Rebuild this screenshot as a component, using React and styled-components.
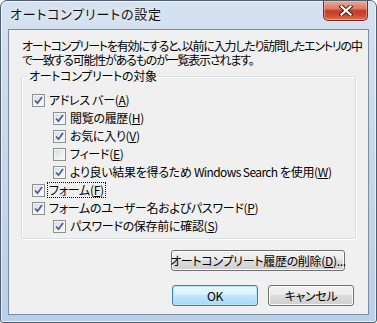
import styled, { createGlobalStyle } from "styled-components";

const GlobalStyle = createGlobalStyle`
  html, body { margin: 0; padding: 0; background: #ffffff; }
  body {
    font-family: "Noto Sans CJK JP", "Noto Sans", sans-serif;
    font-feature-settings: "palt";
    color: #000;
  }
`;

const Window = styled.div`
  width: 377px;
  height: 323px;
  box-sizing: border-box;
  border: 1px solid #4f5d6e;
  border-radius: 7px 7px 3px 3px;
  background: linear-gradient(180deg, #d6e2f0 0%, #cbdaec 35%, #b9d0ea 100%);
  box-shadow: inset 0 0 0 1px rgba(255, 255, 255, 0.65);
  display: flex;
  flex-direction: column;
  padding: 0 7px 7px;
  overflow: hidden;
`;

const TitleBar = styled.div`
  height: 28px;
  flex: none;
  display: flex;
  justify-content: space-between;
  align-items: flex-start;
`;

const Title = styled.div`
  padding: 5px 0 0 2px;
  font-size: 13px;
  letter-spacing: 0.8px;
  line-height: 16px;
  color: #111;
  text-shadow: 0 0 6px rgba(255, 255, 255, 0.9);
`;

const CloseButton = styled.div`
  width: 45px;
  height: 20px;
  margin-right: 1px;
  box-sizing: border-box;
  border: 1px solid #7a2c20;
  border-top: none;
  border-radius: 0 0 5px 5px;
  background: linear-gradient(180deg, #eaa99b 0%, #dc7a65 40%, #c53b22 52%, #cf4f35 80%, #e07a5e 100%);
  box-shadow: inset 0 0 0 1px rgba(255, 200, 190, 0.45);
  display: flex;
  align-items: center;
  justify-content: center;
`;

const Client = styled.div`
  flex: 1;
  background: #f0f0f0;
  border: 1px solid #7d8ca0;
  padding: 0 12px;
  display: flex;
  flex-direction: column;
`;

const Description = styled.p`
  margin: 9px 0 2px 1px;
  font-size: 12px;
  letter-spacing: -1.2px;
  line-height: 14px;
  white-space: nowrap;
`;

const Group = styled.fieldset`
  margin: 0;
  padding: 8px 0 3px 10px;
  border: 1px solid #d5dfe5;
  border-radius: 2px;
  box-shadow: 1px 1px 0 #fff, inset 1px 1px 0 #fff;
  min-width: 0;
`;

const Legend = styled.legend`
  padding: 0 2px 0 1px;
  margin-left: -4px;
  font-size: 12px;
  letter-spacing: -0.3px;
  line-height: 14px;
`;

const Row = styled.div`
  height: 18px;
  display: flex;
  align-items: center;
  padding-left: ${(p) => p.$level * 21}px;
  font-size: 12px;
  letter-spacing: -0.3px;
  white-space: nowrap;
`;

const Latin = styled.span`
  letter-spacing: -0.6px;
`;

const Box = styled.span`
  width: 13px;
  height: 13px;
  box-sizing: border-box;
  flex: none;
  border: 1px solid #8f8f8f;
  background: linear-gradient(135deg, #d6dae0 0%, #eef0f2 60%, #fbfbfb 100%);
  box-shadow: inset 0 0 0 1px #f6f6f6;
  display: flex;
  align-items: center;
  justify-content: center;
  margin-right: 3px;
`;

const Label = styled.span`
  line-height: 14px;
  padding: 0 1px;
  border: 1px dotted ${(p) => (p.$focus ? "#000" : "transparent")};
  margin-left: -1px;
`;

const Key = styled.u`
  text-decoration: underline;
  text-underline-offset: 1px;
`;

const Button = styled.button`
  font-family: inherit;
  font-feature-settings: "palt";
  font-size: 12px;
  letter-spacing: -0.3px;
  color: #000;
  height: 21px;
  width: ${(p) => p.$w}px;
  padding: 0;
  border: 1px solid ${(p) => (p.$default ? "#3c7fb1" : "#707070")};
  border-radius: 3px;
  background: ${(p) =>
    p.$default
      ? "linear-gradient(180deg, #eaf6fd 0%, #d9f0fc 49%, #bee6fd 50%, #a7d9f5 100%)"
      : "linear-gradient(180deg, #f2f2f2 0%, #ebebeb 49%, #dddddd 50%, #cfcfcf 100%)"};
  box-shadow: inset 0 0 0 1px ${(p) => (p.$default ? "#bde3f7" : "#fcfcfc")};
  display: flex;
  align-items: center;
  justify-content: center;
  white-space: nowrap;
`;

const DeleteRow = styled.div`
  display: flex;
  justify-content: flex-end;
  margin-top: 11px;
  padding-right: 11px;
`;

const Footer = styled.div`
  display: flex;
  justify-content: flex-end;
  gap: 10px;
  margin-top: 14px;
  padding-right: 2px;
`;

function Check({ on }) {
  return (
    <Box>
      {on && (
        <svg width="9" height="9" viewBox="0 0 9 9">
          <path d="M1 4.5 L3.5 7.2 L8 1" fill="none" stroke="#4a5e96" strokeWidth="1.8" />
        </svg>
      )}
    </Box>
  );
}

const items = [
  { level: 0, on: true, text: "アドレス バー(", key: "A" },
  { level: 1, on: true, text: "閲覧の履歴(", key: "H" },
  { level: 1, on: true, text: "お気に入り(", key: "V" },
  { level: 1, on: false, text: "フィード(", key: "E" },
  {
    level: 1,
    on: true,
    text: (
      <>
        より良い結果を得るため <Latin>Windows Search</Latin> を使用(
      </>
    ),
    key: "W",
  },
  { level: 0, on: true, text: "フォーム(", key: "F", focus: true },
  { level: 0, on: true, text: "フォームのユーザー名およびパスワード(", key: "P" },
  { level: 1, on: true, text: "パスワードの保存前に確認(", key: "S" },
];

export default function App() {
  return (
    <>
      <GlobalStyle />
      <Window>
        <TitleBar>
          <Title>オートコンプリートの設定</Title>
          <CloseButton>
            <svg width="14" height="11" viewBox="0 0 14 11">
              <path d="M2.5 1.5 L11.5 9.5 M11.5 1.5 L2.5 9.5" stroke="#4a1a12" strokeWidth="4" strokeLinecap="square" />
              <path d="M2.5 1.5 L11.5 9.5 M11.5 1.5 L2.5 9.5" stroke="#ffffff" strokeWidth="2.2" strokeLinecap="square" />
            </svg>
          </CloseButton>
        </TitleBar>
        <Client>
          <Description>
            オートコンプリートを有効にすると、以前に入力したり訪問したエントリの中
            <br />
            で一致する可能性があるものが一覧表示されます。
          </Description>
          <Group>
            <Legend>オートコンプリートの対象</Legend>
            {items.map((it) => (
              <Row key={it.key} $level={it.level}>
                <Check on={it.on} />
                <Label $focus={it.focus}>
                  {it.text}
                  <Key>{it.key}</Key>)
                </Label>
              </Row>
            ))}
          </Group>
          <DeleteRow>
            <Button $w={174}>
              オートコンプリート履歴の削除(<Key>D</Key>)...
            </Button>
          </DeleteRow>
          <Footer>
            <Button $w={86} $default>
              OK
            </Button>
            <Button $w={86}>キャンセル</Button>
          </Footer>
        </Client>
      </Window>
    </>
  );
}
